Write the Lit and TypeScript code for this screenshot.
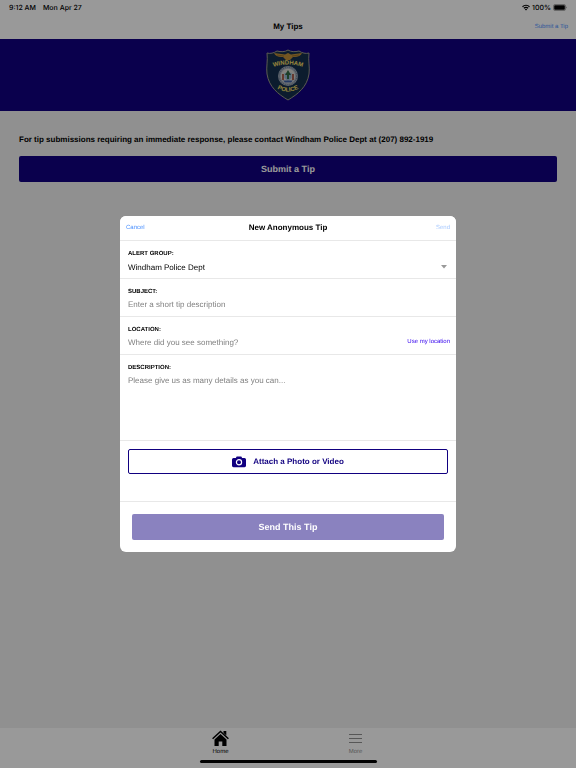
import { LitElement, html, css, svg } from "lit";
import { customElement, state } from "lit/decorators.js";

const badge = svg`
  <path d="M22 1 C25 3 29 3 33 2 C36 4 40 5 43 4 C42 12 44 18 43 25 C41 38 32 45 22 51 C12 45 3 38 1 25 C0 18 2 12 1 4 C4 5 8 4 11 2 C15 3 19 3 22 1Z" fill="#14304e" stroke="#9a9a88" stroke-width="1"/>
  <path d="M8 4 L19 5.500 L22 4 L25 5.500 L36 4 C35 7 31 8.500 27 8 L24 11 H20 L17 8 C13 8.500 9 7 8 4Z" fill="#c08f3a"/>
  <path d="M11 6 L18 7 M33 6 L26 7" stroke="#7a5a20" stroke-width=".6"/>
  <circle cx="22" cy="27" r="10" fill="#a4adb8"/>
  <circle cx="22" cy="27" r="8.800" fill="none" stroke="#6e7f98" stroke-width="1.200" stroke-dasharray="1 1"/>
  <circle cx="22" cy="27" r="7.300" fill="#d8d8d2"/>
  <path d="M18.500 24h7v5l-3.500 3-3.500-3z" fill="#8fb4d2"/>
  <path d="M22 21l3 5h-2v4h-2v-4h-2z" fill="#2f6a45"/>
  <path d="M16 25h2v6h-2zM26 25h2v6h-2z" fill="#a8604f"/>
  <path d="M17 31.500h10l-2 2h-6z" fill="#3c5fa5"/>
  <path id="top" d="M2 20 Q22 11 42 20" fill="none"/>
  <path id="low" d="M7 37 Q22 48 37 37" fill="none"/>
  <text class="arc"><textPath href="#top" startOffset="50%">WINDHAM</textPath></text>
  <text class="arc"><textPath href="#low" startOffset="50%">POLICE</textPath></text>`;

@customElement("app-root")
export class AppRoot extends LitElement {
  @state() private tab = "home";

  static styles = css`
    :host {
      --navy: #110080;
      --blue: #4a90ff;
      display: block;
      font-family: "Liberation Sans", Arial, Helvetica, sans-serif;
      font-size: 8px;
      color: #000;
      text-rendering: geometricPrecision;
    }
    * { box-sizing: border-box; }
    button, input, textarea, select {
      font: inherit;
      color: inherit;
      margin: 0;
      padding: 0;
      border: 0;
      background: none;
      border-radius: 0;
      outline: none;
      text-rendering: inherit;
    }
    h1, h2, p { margin: 0; font-size: 8px; line-height: 12px; }
    .page { display: flex; flex-direction: column; min-height: 100vh; background: #f0f0f0; }
    .status {
      display: flex;
      align-items: center;
      height: 14px;
      padding: 0 9px;
      gap: 7px;
      background: #fff;
      font-family: Inter, "Liberation Sans", sans-serif;
      font-size: 7px;
      font-weight: 500;
    }
    .power { display: flex; align-items: center; gap: 2px; margin-left: auto; }
    .bar {
      display: grid;
      grid-template-columns: 1fr auto 1fr;
      align-items: center;
      height: 25px;
      padding: 0 8px;
      background: #fff;
    }
    .bar h1, .bar h2 { grid-column: 2; text-align: center; }
    .link { color: var(--blue); font-size: 6px; line-height: 10px; }
    .end { justify-self: end; grid-column: 3; }
    .banner {
      display: flex;
      justify-content: center;
      padding: 10px 0;
      background: var(--navy);
    }
    .banner svg { display: block; }
    .arc {
      font: bold 6px "Liberation Sans", sans-serif;
      fill: #ffe066;
      text-anchor: middle;
    }
    .content { flex: 1; padding: 23px 19px; }
    .notice { font-weight: bold; }
    .solid {
      display: block;
      width: 100%;
      height: 26px;
      border-radius: 2px;
      background: var(--navy);
      color: #fff;
      font-size: 9px;
      font-weight: bold;
      text-align: center;
    }
    .content .solid { margin-top: 10px; }
    .tabs {
      display: flex;
      justify-content: center;
      padding-top: 2px;
      background: #fff;
    }
    .tab {
      display: flex;
      flex-direction: column;
      align-items: center;
      width: 135px;
      font-size: 6px;
      line-height: 8px;
      color: #929292;
    }
    .tab svg { display: block; margin-bottom: 1px; }
    .tab.on { color: #000; }
    .home { display: flex; justify-content: center; padding: 4px 0 5px; background: #fff; }
    .home i { width: 177px; height: 3px; border-radius: 2px; background: #000; }
    .shade {
      position: fixed;
      inset: 0;
      display: flex;
      align-items: center;
      justify-content: center;
      background: rgba(0, 0, 0, 0.4);
    }
    .modal {
      width: 100%;
      max-width: 336px;
      border-radius: 6px;
      background: #fff;
      overflow: hidden;
    }
    .modal .bar { padding: 0 6px; border-bottom: 1px solid #e8e8e8; }
    .modal .bar .link { justify-self: start; }
    .modal .bar .end { justify-self: end; opacity: 0.5; }
    .field {
      display: grid;
      grid-template-columns: 1fr auto;
      padding: 8px 6px 3px 8px;
      border-bottom: 1px solid #e8e8e8;
    }
    .field label {
      grid-column: 1 / -1;
      font-size: 6px;
      font-weight: bold;
      line-height: 10px;
    }
    .field input, .field textarea, .field select {
      width: 100%;
      height: 16px;
      line-height: 16px;
    }
    .field select { appearance: none; padding-top: 1px; }
    .field textarea { display: block; height: 64px; resize: none; }
    ::placeholder { color: #808080; opacity: 1; }
    .arrow { align-self: center; margin-right: 3px; }
    .locate { color: #3300ee; font-size: 6px; line-height: 14px; align-self: start; }
    .attach { padding: 8px 8px 27px; border-bottom: 1px solid #e8e8e8; }
    .outline {
      display: flex;
      align-items: center;
      justify-content: center;
      gap: 7px;
      width: 100%;
      height: 25px;
      border: 1px solid var(--navy);
      border-radius: 2px;
      color: var(--navy);
      font-weight: bold;
      font-size: 8px;
    }
    .submit { padding: 12px; }
    .submit .solid { background: #8a82bf; }
  `;

  render() {
    return html`
      <div class="page">
        <div class="status">
          <span>9:12 AM</span><span>Mon Apr 27</span>
          <span class="power">
            <svg width="8" height="7" viewBox="0 0 16 13" fill="none" stroke="#000" stroke-width="2.200">
              <path d="M1 5a10 10 0 0 1 14 0M3.700 8a6 6 0 0 1 8.600 0" />
              <path d="M8 12.500l-2.400-2.600a3.500 3.500 0 0 1 4.800 0z" fill="#000" stroke="none" />
            </svg>
            <span>100%</span>
            <svg width="14" height="7" viewBox="0 0 14 7">
              <rect x=".5" y=".5" width="12" height="6" rx="1.500" fill="none" stroke="#777" stroke-width=".6" />
              <rect x="1.200" y="1.200" width="10.600" height="4.600" rx=".8" />
              <path d="M13.200 2.500q1 1 0 2z" fill="#555" />
            </svg>
          </span>
        </div>
        <header class="bar">
          <h1>My Tips</h1>
          <button class="link end">Submit a Tip</button>
        </header>
        <div class="banner">
          <svg width="44" height="52" viewBox="0 0 44 52" role="img" aria-label="Windham Police">${badge}</svg>
        </div>
        <main class="content">
          <p class="notice">For tip submissions requiring an immediate response, please contact Windham Police Dept at (207) 892-1919</p>
          <button class="solid">Submit a Tip</button>
        </main>
        <nav class="tabs">
          <button class="tab ${this.tab === "home" ? "on" : ""}" @click=${() => (this.tab = "home")}>
            <svg width="17" height="17" viewBox="0 0 17 17">
              <path d="M8.500 4l6 5.500V16H10.300v-4.500H6.700V16H2.500V9.500z" fill="#000" />
              <path d="M.6 8.700L8.500 1.400l7.900 7.300" fill="none" stroke="#000" stroke-width="1.500" />
              <path d="M11.500 1h2.800v4.500l-2.800-2.500z" fill="#000" />
            </svg>
            Home
          </button>
          <button class="tab ${this.tab === "more" ? "on" : ""}" @click=${() => (this.tab = "more")}>
            <svg width="17" height="17" viewBox="0 0 17 17" stroke="#929292" stroke-width="1.200">
              <path d="M2 4.500h13M2 8.500h13M2 12.500h13" />
            </svg>
            More
          </button>
        </nav>
        <div class="home"><i></i></div>
      </div>
      <div class="shade">
        <form class="modal" role="dialog" aria-labelledby="title" @submit=${(e: Event) => e.preventDefault()}>
          <div class="bar">
            <button type="button" class="link">Cancel</button>
            <h2 id="title">New Anonymous Tip</h2>
            <button class="link end" disabled>Send</button>
          </div>
          <div class="field">
            <label for="group">ALERT GROUP:</label>
            <select id="group"><option>Windham Police Dept</option></select>
            <svg class="arrow" width="6" height="4" viewBox="0 0 6 4"><path d="M0 0h6L3 3.500z" fill="#999" /></svg>
          </div>
          <div class="field">
            <label for="subject">SUBJECT:</label>
            <input id="subject" placeholder="Enter a short tip description" />
          </div>
          <div class="field">
            <label for="location">LOCATION:</label>
            <input id="location" placeholder="Where did you see something?" />
            <button type="button" class="locate">Use my location</button>
          </div>
          <div class="field">
            <label for="details">DESCRIPTION:</label>
            <textarea id="details" placeholder="Please give us as many details as you can..."></textarea>
          </div>
          <div class="attach">
            <button type="button" class="outline">
              <svg width="14" height="12" viewBox="0 0 14 12">
                <path d="M1.500 2h2.300l.9-1.600h4.600L10.200 2h2.300Q14 2 14 3.500v6.300q0 1.400-1.500 1.400h-11Q0 11.200 0 9.800V3.500Q0 2 1.500 2z" fill="#110080" />
                <circle cx="7" cy="6.300" r="2.600" fill="none" stroke="#fff" stroke-width="1.200" />
              </svg>
              Attach a Photo or Video
            </button>
          </div>
          <div class="submit"><button class="solid" disabled>Send This Tip</button></div>
        </form>
      </div>
    `;
  }
}
